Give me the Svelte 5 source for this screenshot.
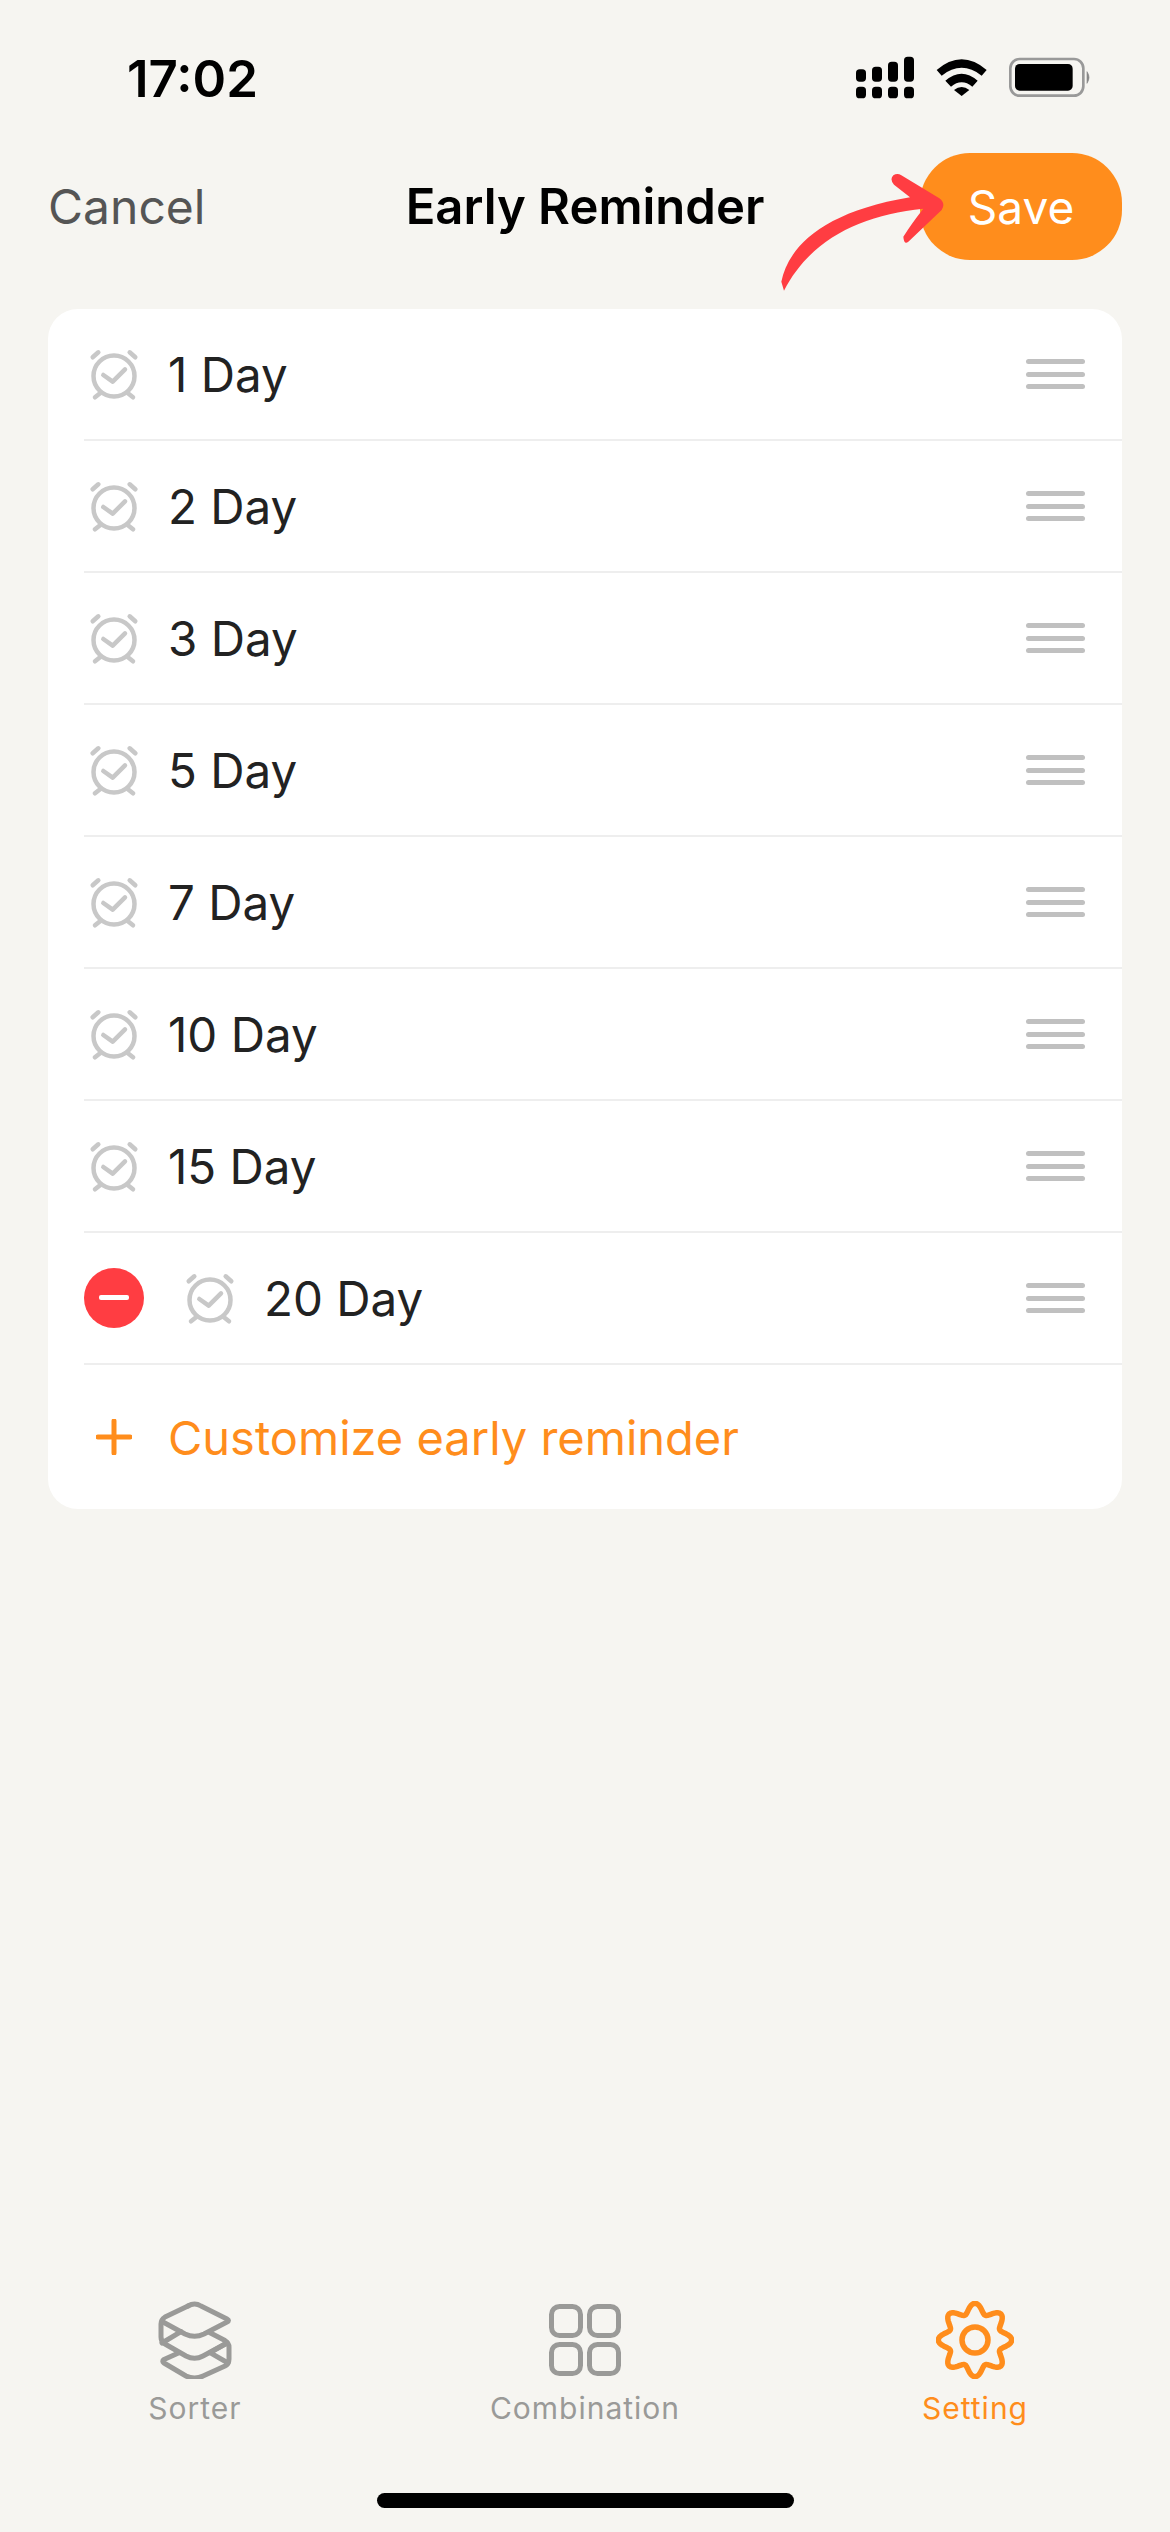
<script lang="ts">
	const days = [1, 2, 3, 5, 7, 10, 15, 20];

	const gearPath = (() => {
		const pts: string[] = [];
		for (let i = 0; i < 160; i++) {
			const t = (i / 160) * Math.PI * 2;
			const r = 31.7 + 5 * Math.cos(8 * t);
			pts.push(`${(39 + r * Math.sin(t)).toFixed(2)} ${(39 - r * Math.cos(t)).toFixed(2)}`);
		}
		return 'M' + pts.join('L') + 'Z';
	})();
</script>

{#snippet alarm()}
	<svg class="alarm" viewBox="0 0 56 56" aria-hidden="true">
		<circle cx="28" cy="28" r="20.5" />
		<path d="M6.7 9.3 12.3 4.3M49.3 9.3 43.7 4.3M9 49.3 14.7 44.7M47 49.3 41.3 44.7" />
		<path d="M17.3 27 26.7 33.7 39 21.3" />
	</svg>
{/snippet}

<div class="page">
	<header class="status">
		<span class="time">17:02</span>
		<svg class="status-icons" viewBox="0 0 810 210" aria-hidden="true">
			<g fill="#000">
				<rect x="48" y="88" width="30" height="37" rx="11" />
				<rect x="96" y="80" width="30" height="45" rx="11" />
				<rect x="144" y="65" width="30" height="60" rx="11" />
				<rect x="192" y="50" width="30" height="75" rx="11" />
				<rect x="48" y="140" width="30" height="35" rx="11" />
				<rect x="96" y="140" width="30" height="35" rx="11" />
				<rect x="144" y="140" width="30" height="35" rx="11" />
				<rect x="192" y="140" width="30" height="35" rx="11" />
				<path d="M290 90Q365 26 440 90L425 107Q365 60 305 107Z" />
				<path d="M316 122Q365 80 413 122L397 140Q365 114 333 140Z" />
				<path d="M342 150Q365 132 388 150L365 168Z" />
				<rect x="525" y="72" width="173" height="80" rx="14" />
			</g>
			<rect x="511" y="57" width="219" height="110" rx="28" fill="none" stroke="#999" stroke-width="8" />
			<path d="M741 95Q753 112 741 130Z" fill="#888" stroke="#888" stroke-width="2" />
		</svg>
	</header>

	<nav class="nav">
		<span class="cancel">Cancel</span>
		<span class="title">Early Reminder</span>
		<button class="save">Save</button>
		<svg class="arrow" viewBox="0 0 1140 510" aria-hidden="true">
			<path d="M72 452 64 425C85 320 190 215 450 172L402 134Q388 118 400 106Q412 98 424 106L538 175Q558 190 545 210L445 305Q432 316 430 290Q455 250 490 206C300 225 150 300 72 452Z" />
		</svg>
	</nav>

	<main class="card">
		{#each days as day, i}
			<div class="row">
				{#if i === days.length - 1}
					<span class="minus"></span>
				{/if}
				{@render alarm()}
				<span class="label">{day} Day</span>
				<span class="handle"><i></i><i></i><i></i></span>
			</div>
		{/each}
		<div class="add">
			<svg class="plus" viewBox="0 0 36 36" aria-hidden="true">
				<path d="M18 2V34M2 18H34" />
			</svg>
			<span>Customize early reminder</span>
		</div>
	</main>

	<footer class="tabs">
		<div class="tab">
			<svg class="icon" viewBox="0 0 78 78" aria-hidden="true">
				<g transform="translate(3 1)">
					<path d="M29 4Q35.6 0 42 4L68 17Q71 18.5 68 20L45 32Q35.6 36.5 26 32L4 20" />
					<path d="M29 4 6 15Q2 17.5 2 22V35Q2 40 6 42L27 54Q35.6 58.5 44 54L68 41" />
					<path d="M51 30.7 66 38.5Q70 41 70 45V57Q70 62 66 64L44 74Q35.6 78 27 74L5 61Q2.5 59 5 57.5L20 50.7" />
					<path d="M22 29.7 3 41M51 50.7 69 61M51 50.7 68 41" />
				</g>
			</svg>
			<span>Sorter</span>
		</div>
		<div class="tab">
			<svg class="icon" viewBox="0 0 78 78" aria-hidden="true">
				<rect x="5.5" y="5.5" width="29" height="29" rx="8" />
				<rect x="43.5" y="5.5" width="29" height="29" rx="8" />
				<rect x="5.5" y="43.5" width="29" height="29" rx="8" />
				<rect x="43.5" y="43.5" width="29" height="29" rx="8" />
			</svg>
			<span>Combination</span>
		</div>
		<div class="tab active">
			<svg class="icon" viewBox="0 0 78 78" aria-hidden="true">
				<path d={gearPath} />
				<circle cx="39" cy="39" r="13" />
			</svg>
			<span>Setting</span>
		</div>
	</footer>

	<div class="home"></div>
</div>

<style>
	:global(body) {
		margin: 0;
		background: #f6f5f1;
	}

	.page {
		display: flex;
		flex-direction: column;
		width: 1170px;
		height: 2532px;
		font-family: Inter, 'Noto Sans', sans-serif;
		color: #222;
		background: #f6f5f1;
	}

	.status {
		display: flex;
		align-items: center;
		justify-content: space-between;
		height: 70px;
		margin-top: 40px;
		padding: 0 60px 0 127px;
	}

	.time {
		margin-top: 6px;
		font-size: 51px;
		font-weight: 600;
		color: #000;
	}

	.status-icons {
		width: 270px;
		height: 70px;
	}

	.nav {
		position: relative;
		display: grid;
		grid-template-columns: 1fr auto 1fr;
		align-items: center;
		height: 107px;
		margin-top: 43px;
		padding: 0 48px;
	}

	.cancel {
		font-size: 48px;
		color: #555;
	}

	.title {
		font-size: 49px;
		font-weight: 600;
		color: #000;
	}

	.save {
		justify-self: end;
		width: 202px;
		height: 107px;
		padding: 0;
		border: 0;
		border-radius: 50px;
		background: #ff8d1c;
		color: #fff;
		font: 400 46px Inter, sans-serif;
	}

	.arrow {
		position: absolute;
		left: 760px;
		top: -13px;
		width: 380px;
		height: 170px;
		fill: #ff3d42;
	}

	.card {
		margin: 49px 48px 0;
		height: 1200px;
		border-radius: 30px;
		background: #fff;
	}

	.row {
		display: flex;
		align-items: center;
		height: 130px;
		margin-left: 36px;
		border-bottom: 2px solid #eeeeee;
	}

	.alarm {
		flex: none;
		width: 56px;
		height: 56px;
		margin: 4px 0 0 2px;
		fill: none;
		stroke: #c8c8c8;
		stroke-width: 4.5;
		stroke-linecap: round;
		stroke-linejoin: round;
	}

	.label {
		margin-left: 26px;
		font-size: 47.5px;
		font-weight: 400;
	}

	.minus {
		position: relative;
		flex: none;
		width: 60px;
		height: 60px;
		margin-right: 36px;
		border-radius: 50%;
		background: #ff3d42;
	}

	.minus::after {
		content: '';
		position: absolute;
		left: 15px;
		top: 27px;
		width: 30px;
		height: 5px;
		border-radius: 2px;
		background: #fff;
	}

	.handle {
		display: flex;
		flex-direction: column;
		gap: 7.5px;
		width: 59px;
		margin-left: auto;
		margin-right: 37px;
	}

	.handle i {
		display: block;
		height: 5px;
		border-radius: 3px;
		background: #c0c0c0;
	}

	.add {
		display: flex;
		align-items: center;
		height: 144px;
		padding-left: 48px;
		color: #ff8d1c;
		font-size: 47px;
		font-weight: 400;
	}

	.plus {
		width: 36px;
		height: 36px;
		margin-right: 36px;
		fill: none;
		stroke: #ff8d1c;
		stroke-width: 5;
		stroke-linecap: round;
	}

	.tabs {
		display: grid;
		grid-template-columns: repeat(3, 390px);
		margin-top: auto;
	}

	.tab {
		display: flex;
		flex-direction: column;
		align-items: center;
		font-size: 30px;
		letter-spacing: 1px;
		color: #9a9a98;
	}

	.tab.active {
		color: #ff8d1c;
	}

	.icon {
		width: 78px;
		height: 78px;
		margin-bottom: 11px;
		fill: none;
		stroke: #9a9a98;
		stroke-width: 5;
		stroke-linecap: round;
		stroke-linejoin: round;
	}

	.active .icon {
		stroke: #ff8d1c;
		stroke-width: 5.5;
	}

	.home {
		align-self: center;
		width: 417px;
		height: 15px;
		margin: 67px 0 24px;
		border-radius: 8px;
		background: #000;
	}
</style>
